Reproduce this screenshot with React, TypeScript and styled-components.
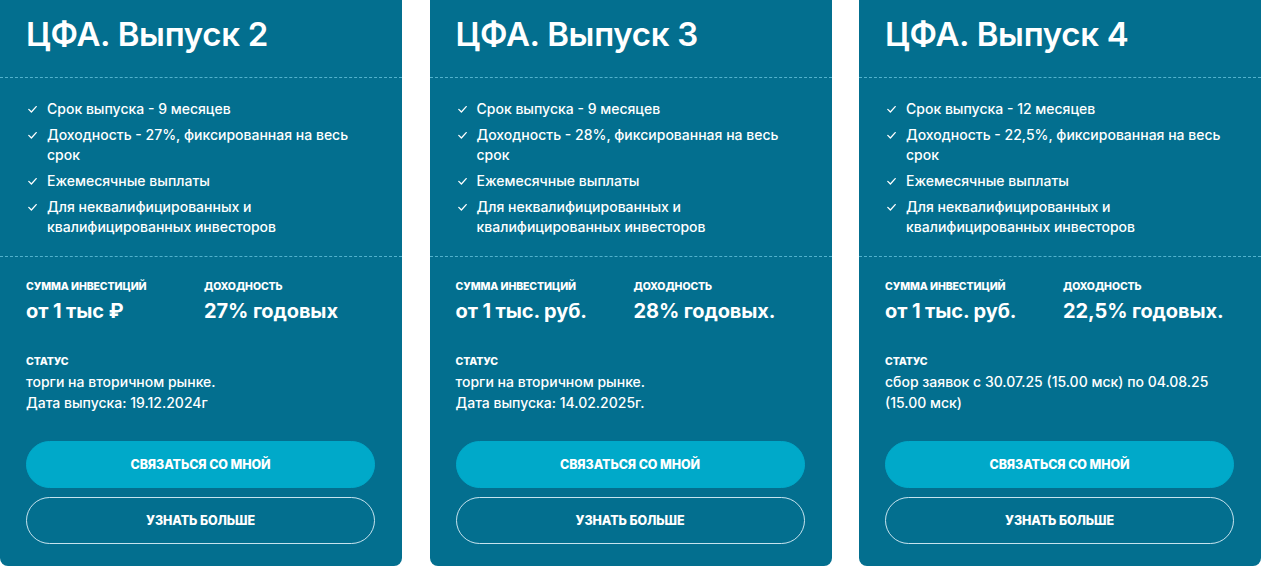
import React from 'react';
import styled, { createGlobalStyle } from 'styled-components';

const GlobalStyle = createGlobalStyle`
  html, body {
    margin: 0;
    padding: 0;
    background: #ffffff;
    overflow: hidden;
  }
  * {
    box-sizing: border-box;
  }
`;

const Page = styled.div`
  width: 1265px;
  height: 569px;
  overflow: hidden;
  font-family: Inter, 'Noto Sans', Arial, sans-serif;
  color: #ffffff;
`;

const Grid = styled.div`
  display: grid;
  grid-template-columns: repeat(3, 402px);
  column-gap: 27.5px;
  margin-top: -10px;
`;

const Card = styled.article`
  display: flex;
  flex-direction: column;
  background-color: #036f8f;
  border-radius: 8px;
  padding-bottom: 22px;
`;

const Header = styled.div`
  padding: 23px 26px 21px;
  border-bottom: 1px dashed rgba(110, 200, 225, 0.75);
`;

const Title = styled.h2`
  margin: 0;
  font-size: 33px;
  line-height: 43px;
  font-weight: 600;
  letter-spacing: -0.3px;
`;

const Features = styled.ul`
  list-style: none;
  margin: 0;
  padding: 21px 26px 19px 28px;
  display: flex;
  flex-direction: column;
  gap: 6px;
  border-bottom: 1px dashed rgba(110, 200, 225, 0.75);
`;

const Feature = styled.li`
  display: flex;
  align-items: flex-start;
  gap: 10px;
  font-size: 14px;
  line-height: 20px;
  font-weight: 500;
`;

const Check = styled.svg`
  flex: none;
  width: 9px;
  height: 20px;
`;

const Stats = styled.div`
  display: grid;
  grid-template-columns: 178px 1fr;
  padding: 23px 26px 0;
`;

const Label = styled.div`
  font-size: 10.5px;
  line-height: 14px;
  font-weight: 800;
  text-transform: uppercase;
  letter-spacing: -0.1px;
`;

const Value = styled.div`
  margin-top: 5px;
  font-size: 20px;
  line-height: 24px;
  font-weight: 700;
  letter-spacing: -0.1px;
`;

const Status = styled.div`
  padding: 32px 26px 0;
`;

const StatusText = styled.p`
  margin: 2px 0 0;
  font-size: 14px;
  line-height: 21px;
  font-weight: 500;
  white-space: pre-line;
`;

const Actions = styled.div`
  margin-top: auto;
  padding: 28px 27px 0 26px;
  display: flex;
  flex-direction: column;
  gap: 9px;
`;

const Button = styled.button<{ $variant: 'filled' | 'outline' }>`
  height: 47px;
  width: 100%;
  border-radius: 24px;
  border: 1px solid
    ${(p) => (p.$variant === 'filled' ? '#00a9c9' : 'rgba(220, 240, 248, 0.9)')};
  background: ${(p) => (p.$variant === 'filled' ? '#00a9c9' : 'transparent')};
  color: #ffffff;
  font-family: Inter, 'Noto Sans', Arial, sans-serif;
  font-size: 12.5px;
  font-weight: 800;
  text-transform: uppercase;
  letter-spacing: -0.1px;
  cursor: pointer;
`;

interface Issue {
  id: number;
  term: string;
  yieldText: string;
  amount: string;
  yieldValue: string;
  status: string;
}

const issues: Issue[] = [
  {
    id: 2,
    term: '9 месяцев',
    yieldText: '27%',
    amount: 'от 1 тыс ₽',
    yieldValue: '27% годовых',
    status: 'торги на вторичном рынке.\nДата выпуска: 19.12.2024г',
  },
  {
    id: 3,
    term: '9 месяцев',
    yieldText: '28%',
    amount: 'от 1 тыс. руб.',
    yieldValue: '28% годовых.',
    status: 'торги на вторичном рынке.\nДата выпуска: 14.02.2025г.',
  },
  {
    id: 4,
    term: '12 месяцев',
    yieldText: '22,5%',
    amount: 'от 1 тыс. руб.',
    yieldValue: '22,5% годовых.',
    status: 'сбор заявок с 30.07.25 (15.00 мск) по 04.08.25\n(15.00 мск)',
  },
];

const CheckIcon = () => (
  <Check viewBox="0 0 9 20" fill="none">
    <path
      d="M0.8 10.4 L3.4 13 L8.2 7.6"
      stroke="#ffffff"
      strokeWidth="1.3"
      strokeLinecap="round"
      strokeLinejoin="round"
    />
  </Check>
);

const IssueCard: React.FC<{ issue: Issue }> = ({ issue }) => {
  const features = [
    `Срок выпуска - ${issue.term}`,
    `Доходность - ${issue.yieldText}, фиксированная на весь срок`,
    'Ежемесячные выплаты',
    'Для неквалифицированных и квалифицированных инвесторов',
  ];

  return (
    <Card>
      <Header>
        <Title>ЦФА. Выпуск {issue.id}</Title>
      </Header>
      <Features>
        {features.map((text) => (
          <Feature key={text}>
            <CheckIcon />
            <span>{text}</span>
          </Feature>
        ))}
      </Features>
      <Stats>
        <div>
          <Label>Сумма инвестиций</Label>
          <Value>{issue.amount}</Value>
        </div>
        <div>
          <Label>Доходность</Label>
          <Value>{issue.yieldValue}</Value>
        </div>
      </Stats>
      <Status>
        <Label>Статус</Label>
        <StatusText>{issue.status}</StatusText>
      </Status>
      <Actions>
        <Button $variant="filled">Связаться со мной</Button>
        <Button $variant="outline">Узнать больше</Button>
      </Actions>
    </Card>
  );
};

export default function App() {
  return (
    <Page>
      <GlobalStyle />
      <Grid>
        {issues.map((issue) => (
          <IssueCard key={issue.id} issue={issue} />
        ))}
      </Grid>
    </Page>
  );
}
